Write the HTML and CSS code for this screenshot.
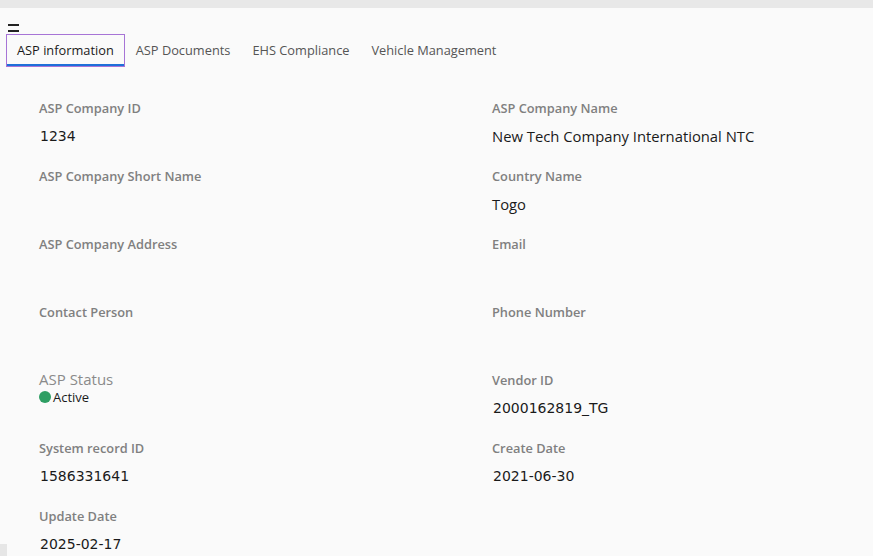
FILE: index.html
```html
<!DOCTYPE html>
<html>
<head>
<meta charset="utf-8">
<link rel="stylesheet" href="styles.css">
</head>
<body>
<div class="topbar"></div>
<div class="page">
  <div class="menu"><span class="bar"></span><span class="bar"></span></div>
  <nav class="tabs">
    <div class="tab active">ASP information</div>
    <div class="tab">ASP Documents</div>
    <div class="tab">EHS Compliance</div>
    <div class="tab">Vehicle Management</div>
  </nav>
  <div class="grid">
    <div class="field"><div class="label">ASP Company ID</div><div class="value num">1234</div></div>
    <div class="field"><div class="label">ASP Company Name</div><div class="value">New Tech Company International NTC</div></div>
    <div class="field"><div class="label">ASP Company Short Name</div><div class="value"></div></div>
    <div class="field"><div class="label">Country Name</div><div class="value">Togo</div></div>
    <div class="field"><div class="label">ASP Company Address</div><div class="value"></div></div>
    <div class="field"><div class="label">Email</div><div class="value"></div></div>
    <div class="field"><div class="label">Contact Person</div><div class="value"></div></div>
    <div class="field"><div class="label">Phone Number</div><div class="value"></div></div>
    <div class="field"><div class="status-label">ASP Status</div><div class="status"><span class="dot"></span>Active</div></div>
    <div class="field"><div class="label">Vendor ID</div><div class="value num">2000162819_TG</div></div>
    <div class="field"><div class="label">System record ID</div><div class="value num">1586331641</div></div>
    <div class="field"><div class="label">Create Date</div><div class="value num">2021-06-30</div></div>
    <div class="field"><div class="label">Update Date</div><div class="value num">2025-02-17</div></div>
  </div>
</div>
<div class="corner"></div>
</body>
</html>
```
FILE: styles.css
```css
* { box-sizing: border-box; }
html, body { margin: 0; padding: 0; height: 100%; overflow: hidden; }
body {
  background: #fafafa;
  font-family: "Open Sans", "Noto Sans", sans-serif;
  color: #1a1a1a;
  position: relative;
}
.topbar { height: 8px; background: #e8e8e8; }
.page { padding: 0 6px; }
.menu {
  height: 26px;
  padding-top: 16px;
  padding-left: 2px;
  display: flex;
  flex-direction: column;
  gap: 4px;
}
.bar { display: block; width: 11px; height: 2px; background: #222; }
.tabs { display: flex; height: 33px; }
.tab {
  padding: 0 10px;
  font-size: 12.8px;
  line-height: 30px;
  color: #555;
  white-space: nowrap;
  border: 1px solid transparent;
}
.tab.active {
  color: #1a1a1a;
  border: 1px solid #a774d6;
  box-shadow: inset 0 -2px 0 #1e6fd9;
}
.grid {
  display: grid;
  grid-template-columns: 453px 1fr;
  padding-left: 33px;
  padding-top: 33px;
}
.field { height: 68px; }
.label {
  font-size: 12.8px;
  font-weight: 600;
  color: #808080;
  line-height: 17px;
}
.value {
  margin-top: 9px;
  font-size: 14.8px;
  line-height: 20px;
  color: #1a1a1a;
}
.value.num { font-family: "DejaVu Sans", sans-serif; font-size: 14px; padding-left: 1px; }
.status-label {
  font-size: 15px;
  color: #8a8a8a;
  line-height: 20px;
  margin-top: -3px;
}
.status {
  display: flex;
  align-items: center;
  font-size: 13px;
  line-height: 16px;
  color: #1a1a1a;
}
.dot {
  width: 12px; height: 12px; border-radius: 50%;
  background: #2e9e63;
  margin-right: 2px;
}
.corner {
  position: absolute; left: 0; bottom: 0;
  width: 7px; height: 12px; background: #e6e6e6;
}
```
